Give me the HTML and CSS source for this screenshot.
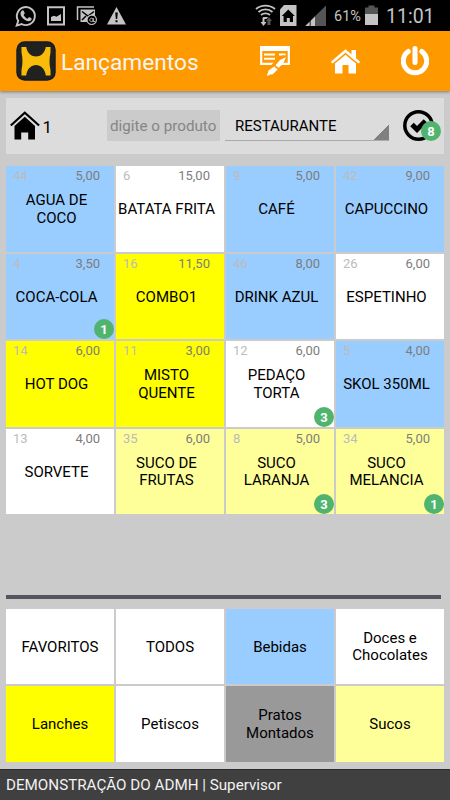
FILE: index.html
```html
<!DOCTYPE html>
<html lang="pt-BR">
<head>
    <meta charset="UTF-8">
    <meta name="viewport" content="width=device-width, initial-scale=1.0">
    <title>Lançamentos</title>
    <link rel="stylesheet" href="styles.css">
</head>
<body>

    <!-- Status bar -->
    <div class="status-bar">
        <svg width="107" height="31" viewBox="0 0 107 31">
            <path d="M16.700 25.600l1.500-4.800a9 9 0 1 1 3.400 3.200z" fill="none" stroke="#c4c4c4" stroke-width="1.900"/>
            <path d="M21.500 11c1-1 2-.8 2.500.4l.8 1.900-1.200 1.600c1 2 2.200 3 4 3.800l1.400-1.600 2.500 1.200c.6 2-1.600 3.300-3.500 2.900-4-.9-8-5-7.500-8.200.1-.8.500-1.500 1-2z" fill="#c4c4c4"/>
            <path d="M48 7.200h16v17.300H48z" fill="none" stroke="#c4c4c4" stroke-width="2"/>
            <path d="M51 21v-4l3-1.200 2.500 1L61 14v7z" fill="#c4c4c4"/>
            <path d="M77.500 20V7H94" fill="none" stroke="#c4c4c4" stroke-width="1.500"/>
            <path d="M80.500 9.500H95v8c-4-1-7 1-8 4.500h-6.500z" fill="#c4c4c4"/>
            <path d="M82 11.500l6 4.500 6-4.500M82 20l4-4" fill="none" stroke="#000" stroke-width="1.500"/>
            <circle cx="91.700" cy="19.800" r="4.700" fill="#000" stroke="#c4c4c4" stroke-width="1.200"/>
            <path d="M93.200 18v3.500h2M93.200 20a1.700 1.700 0 1 1 0-.2" fill="none" stroke="#c4c4c4"/>
        </svg>
        <svg width="20" height="31" viewBox="0 0 20 31">
            <path d="M9.500 7L19 24.500H0z" fill="#c4c4c4"/>
            <path d="M8.200 12.500h2.600l-.6 6.500H8.800zM8.500 20.200h2v2h-2z" fill="#000"/>
        </svg>
        <svg class="status-signal" width="74" height="31" viewBox="0 0 74 31">
            <g fill="none" stroke="#c4c4c4" stroke-width="1.800">
                <path d="M1 9c5.500-4.500 13.500-4.500 19 0M3.500 12c4-3.500 10-3.500 14 0M6 15c2.500-2.200 6.500-2.200 9 0"/>
            </g>
            <path d="M7.500 17h5.500l-1.500 2H9z" fill="#c4c4c4"/>
            <path d="M7.500 18h2v4h2l-3 4-3-4h2z" fill="#c4c4c4"/>
            <path d="M12.500 25v-4h-1.500l3-4 3 4h-1.500v4z" fill="#555"/>
            <path d="M25 9.500L29 5h12.500v21H25z" fill="#c4c4c4"/>
            <path d="M33.300 9.500l6.500 6.500H38v6h-3.200v-4h-3v4h-3.200v-6h-1.800z" fill="#000"/>
            <path d="M50 26L71 5.500V26z" fill="#555"/>
            <path d="M50.500 26l4-4v4zM56 26v-5.500l4-4V26z" fill="#c4c4c4"/>
        </svg>
        <span class="battery-text">61%</span>
        <svg class="status-battery" width="13" height="31" viewBox="0 0 13 31">
            <path d="M3.500 5.500h6v2H13V14H0V7.500h3.500z" fill="#555"/>
            <path d="M0 14h13v11H0z" fill="#c4c4c4"/>
        </svg>
        <span class="clock">11:01</span>
    </div>

    <!-- Header -->
    <div class="header">
        <svg class="logo" width="40" height="40" viewBox="0 0 40 40">
            <rect x=".3" y=".3" width="39.400" height="39.400" rx="8.500" fill="#111827"/>
            <rect x="1.500" y="1.500" width="37" height="37" rx="7.500" fill="#21221f"/>
            <path d="M5.500 6h4.700c1 6.500 5.500 9.500 9.800 9.500s8.800-3 9.800-9.500h4.700v5.500c-1.300 6-1.300 12 0 17.500V34.500h-4.700c-.8-7-5.300-10.500-9.800-10.500s-9 3.500-9.800 10.500H5.500V29c1.300-6 1.300-12 0-17.500z" fill="#f9bd09"/>
        </svg>
        <h1>Lançamentos</h1>
        <div class="header-actions">
            <svg width="30" height="32" viewBox="0 0 30 32">
                <path d="M1.200 2h27.600v16.800H1.200z" fill="none" stroke="#fff" stroke-width="2.200"/>
                <path d="M0 1h30v5H0zM4 8.500h11v2H4zM4 12.800h11v2H4zM19 8.500h6.500v2H19z" fill="#fff"/>
                <path d="M25.500 12L15 20.500l-4 4.500-2.500 1.500L7 30" fill="none" stroke="#ff9900" stroke-width="6"/>
                <path d="M26 12l-2.500 6-5 5-3-2.700 4.500-5.300zM14.300 21.500l3.300 3-4.800 4.700-3.600.6-1.200 1.100L6.600 30l1-1.200.9-3.300z" fill="#fff"/>
            </svg>
            <svg width="29" height="25" viewBox="0 0 29 25">
                <path d="M1.500 13L14.500 2l13 11" fill="none" stroke="#fff" stroke-width="2.500" stroke-linecap="round"/>
                <path d="M20.500 1H25v9l-4.500-4zM14.500 5.800L25 14.500V24.500h-7.500V16h-6v8.500H4V14.500z" fill="#fff"/>
            </svg>
            <svg width="28" height="30" viewBox="0 0 28 30">
                <path d="M7.200 5.500a11.700 11.700 0 1 0 13.600 0M14 2.500v14" fill="none" stroke="#fff" stroke-width="5" stroke-linecap="round"/>
            </svg>
        </div>
    </div>

    <!-- Order bar -->
    <div class="order-bar">
        <svg class="home-icon" width="30" height="29" viewBox="0 0 30 29">
            <path d="M.8 14.500L14.800 1.800l14.300 12.700" fill="none" stroke="#000" stroke-width="2.200"/>
            <path d="M14.800 5.800L25 15v13.500h-6.800V21.500h-7V28.500H4.500V15z" fill="#000"/>
        </svg>
        <span class="order-number">1</span>
        <input class="search" type="text" placeholder="digite o produto">
        <div class="select">RESTAURANTE</div>
        <div class="check">
            <svg width="31" height="31" viewBox="0 0 31 31">
                <circle cx="15.500" cy="15.500" r="13.700" fill="none" stroke="#000" stroke-width="3.500"/>
                <path d="M9 14.500l5 5 8.500-8.500" fill="none" stroke="#000" stroke-width="5"/>
            </svg>
            <span class="badge">8</span>
        </div>
    </div>

    <!-- Products -->
    <div class="products">
        <div class="product blue"><span class="code">44</span><span class="price">5,00</span><p>AGUA DE COCO</p></div>
        <div class="product"><span class="code">6</span><span class="price">15,00</span><p>BATATA FRITA</p></div>
        <div class="product blue"><span class="code">9</span><span class="price">5,00</span><p>CAFÉ</p></div>
        <div class="product blue"><span class="code">42</span><span class="price">9,00</span><p>CAPUCCINO</p></div>

        <div class="product blue"><span class="code">4</span><span class="price">3,50</span><p>COCA-COLA</p><span class="badge">1</span></div>
        <div class="product yellow"><span class="code">16</span><span class="price">11,50</span><p>COMBO1</p></div>
        <div class="product blue"><span class="code">46</span><span class="price">8,00</span><p>DRINK AZUL</p></div>
        <div class="product"><span class="code">26</span><span class="price">6,00</span><p>ESPETINHO</p></div>

        <div class="product yellow"><span class="code">14</span><span class="price">6,00</span><p>HOT DOG</p></div>
        <div class="product yellow"><span class="code">11</span><span class="price">3,00</span><p>MISTO QUENTE</p></div>
        <div class="product"><span class="code">12</span><span class="price">6,00</span><p>PEDAÇO TORTA</p><span class="badge">3</span></div>
        <div class="product blue"><span class="code">5</span><span class="price">4,00</span><p>SKOL 350ML</p></div>

        <div class="product"><span class="code">13</span><span class="price">4,00</span><p>SORVETE</p></div>
        <div class="product light"><span class="code">35</span><span class="price">6,00</span><p>SUCO DE FRUTAS</p></div>
        <div class="product light"><span class="code">8</span><span class="price">5,00</span><p>SUCO LARANJA</p><span class="badge">3</span></div>
        <div class="product light"><span class="code">34</span><span class="price">5,00</span><p>SUCO MELANCIA</p><span class="badge">1</span></div>
    </div>

    <div class="divider"></div>

    <!-- Categories -->
    <div class="categories">
        <div class="category">FAVORITOS</div>
        <div class="category">TODOS</div>
        <div class="category blue">Bebidas</div>
        <div class="category">Doces e Chocolates</div>
        <div class="category yellow">Lanches</div>
        <div class="category">Petiscos</div>
        <div class="category gray">Pratos Montados</div>
        <div class="category light">Sucos</div>
    </div>

    <!-- Footer -->
    <div class="footer">DEMONSTRAÇÃO DO ADMH | Supervisor</div>

</body>
</html>
```
FILE: styles.css
```css
* {
    margin: 0;
    padding: 0;
    box-sizing: border-box;
    font-family: Roboto, sans-serif;
}

body {
    display: flex;
    flex-direction: column;
    width: 450px;
    height: 800px;
    background: #cbcbcb;
    color: #000;
    font-size: 15px;
    overflow: hidden;
}

svg {
    display: block;
    flex-shrink: 0;
}

/* Status bar */
.status-bar {
    display: flex;
    align-items: center;
    height: 31px;
    flex-shrink: 0;
    background: #000;
    color: #c4c4c4;
}

.status-signal {
    margin-left: 128px;
}

.battery-text {
    width: 29px;
    margin-left: 5px;
    padding-top: 2px;
    font-size: 14.5px;
}

.status-battery {
    margin-left: 2px;
}

.clock {
    margin-left: 8px;
    padding-top: 2px;
    font-size: 19.5px;
}

/* Header */
.header {
    display: flex;
    align-items: center;
    height: 60px;
    flex-shrink: 0;
    padding: 0 21px 0 15.5px;
    background: #ff9900;
    box-shadow: 0 1px 3px rgba(0, 0, 0, 0.4);
}

.header h1 {
    margin-left: 5.5px;
    padding-top: 2px;
    font-size: 22.7px;
    font-weight: normal;
    color: #f5f5f5;
}

.header-actions {
    display: flex;
    align-items: center;
    gap: 41px;
    margin-left: auto;
}

/* Order bar */
.order-bar {
    display: flex;
    align-items: center;
    height: 56.5px;
    flex-shrink: 0;
    margin: 6.5px 6px 12px;
    padding-left: 4px;
    background: #dcdcdc;
}

.order-number {
    width: 65px;
    padding: 2px 0 0 2.5px;
    font-size: 17px;
}

.search {
    width: 113px;
    height: 31px;
    margin-left: 2px;
    padding: 1px 0 0 3px;
    border: none;
    background: #cbcbcb;
    font-size: 15.2px;
}

.search::placeholder {
    color: #858585;
}

.select {
    width: 164px;
    height: 31px;
    margin-left: 5px;
    padding-left: 10px;
    border-bottom: 1px solid #aaa;
    line-height: 33px;
    background: linear-gradient(135deg, transparent 50%, #808080 50%) right bottom / 15px 15px no-repeat;
}

.check {
    position: relative;
    margin-left: 14px;
}

.badge {
    position: absolute;
    right: 0;
    bottom: 0;
    width: 20px;
    height: 20px;
    border-radius: 50%;
    background: #50b46e;
    color: #fff;
    font-size: 13px;
    font-weight: bold;
    line-height: 21px;
    text-align: center;
}

.check .badge {
    right: -7px;
}

/* Products */
.products {
    display: grid;
    grid-template-columns: repeat(4, 108px);
    grid-auto-rows: 85.5px;
    gap: 2px;
    height: 348px;
    margin-left: 6px;
}

.product {
    position: relative;
    display: grid;
    grid-template-columns: auto 1fr;
    grid-template-rows: 18px 1fr 17px;
    padding: 0 14px 0 7px;
    background: #fff;
}

.code,
.price {
    font-size: 13px;
    line-height: 20px;
}

.code {
    color: #bbb;
}

.price {
    color: #7d7d7d;
    text-align: right;
}

.product p {
    grid-column: 1 / 3;
    align-self: center;
    margin: 1px -7px 0;
    line-height: 17.5px;
    text-align: center;
}

.divider {
    height: 4px;
    flex-shrink: 0;
    margin: 81px 9px 9.5px 6px;
    background: #555560;
}

/* Categories */
.categories {
    display: grid;
    grid-template-columns: repeat(4, 108px);
    grid-auto-rows: 75.5px;
    gap: 2px;
    margin-left: 6px;
}

.category {
    display: flex;
    align-items: center;
    justify-content: center;
    padding: 2px 10px 0;
    background: #fff;
    line-height: 17.5px;
    text-align: center;
}

/* Tile colors */
.blue {
    background: #99ccff;
}

.yellow {
    background: #ffff00;
}

.light {
    background: #ffff99;
}

.gray {
    background: #999;
}

/* Footer */
.footer {
    height: 31px;
    margin-top: auto;
    padding-left: 6px;
    border-top: 1px solid #2c2c2c;
    background: #404040;
    color: #f2f2f2;
    font-size: 15.2px;
    line-height: 31px;
}
```
